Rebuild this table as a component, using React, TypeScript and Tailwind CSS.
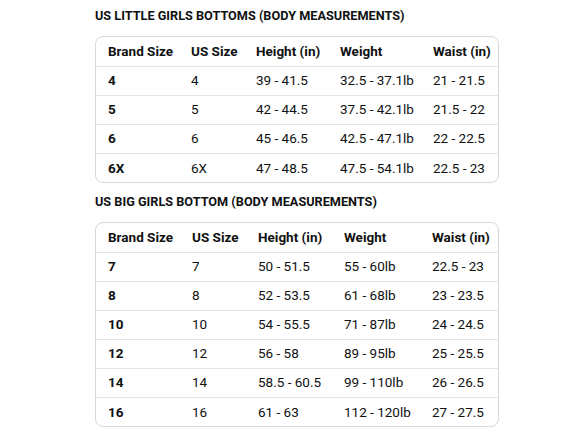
import React from 'react';

type Chart = {
  title: string;
  cols: number[];
  rows: string[][];
};

const headers = ['Brand Size', 'US Size', 'Height (in)', 'Weight', 'Waist (in)'];

const charts: Chart[] = [
  {
    title: 'US LITTLE GIRLS BOTTOMS (BODY MEASUREMENTS)',
    cols: [83, 65, 84, 93, 77],
    rows: [
      ['4', '4', '39 - 41.5', '32.5 - 37.1lb', '21 - 21.5'],
      ['5', '5', '42 - 44.5', '37.5 - 42.1lb', '21.5 - 22'],
      ['6', '6', '45 - 46.5', '42.5 - 47.1lb', '22 - 22.5'],
      ['6X', '6X', '47 - 48.5', '47.5 - 54.1lb', '22.5 - 23'],
    ],
  },
  {
    title: 'US BIG GIRLS BOTTOM (BODY MEASUREMENTS)',
    cols: [84, 66, 86, 88, 78],
    rows: [
      ['7', '7', '50 - 51.5', '55 - 60lb', '22.5 - 23'],
      ['8', '8', '52 - 53.5', '61 - 68lb', '23 - 23.5'],
      ['10', '10', '54 - 55.5', '71 - 87lb', '24 - 24.5'],
      ['12', '12', '56 - 58', '89 - 95lb', '25 - 25.5'],
      ['14', '14', '58.5 - 60.5', '99 - 110lb', '26 - 26.5'],
      ['16', '16', '61 - 63', '112 - 120lb', '27 - 27.5'],
    ],
  },
];

const SizeTable = ({ chart }: { chart: Chart }) => (
  <div>
    <h2 className="text-[12.7px] font-bold leading-[20px] mb-[10px]">{chart.title}</h2>
    <div className="border border-[#d5d9d9] rounded-lg overflow-hidden">
      <table className="w-full table-fixed border-collapse text-[13.5px]">
        <colgroup>
          {chart.cols.map((w, i) => (
            <col key={i} style={{ width: w }} />
          ))}
        </colgroup>
        <thead>
          <tr className="h-[29px]">
            {headers.map((h) => (
              <th key={h} className="text-left font-bold px-3 whitespace-nowrap">
                {h}
              </th>
            ))}
          </tr>
        </thead>
        <tbody>
          {chart.rows.map((row) => (
            <tr key={row[0]} className="h-[29px] border-t border-[#e3e6e6]">
              {row.map((cell, i) => (
                <td key={i} className={`px-3 whitespace-nowrap ${i === 0 ? 'font-bold' : ''}`}>
                  {cell}
                </td>
              ))}
            </tr>
          ))}
        </tbody>
      </table>
    </div>
  </div>
);

export default function App() {
  return (
    <div className="w-[588px] h-[441px] bg-white text-[#0f1111] overflow-hidden" style={{ fontFamily: 'Roboto, Arial, sans-serif' }}>
      <div className="ml-[95px] w-[404px] pt-[6px] flex flex-col gap-[9px]">
        {charts.map((c) => (
          <SizeTable key={c.title} chart={c} />
        ))}
      </div>
    </div>
  );
}
